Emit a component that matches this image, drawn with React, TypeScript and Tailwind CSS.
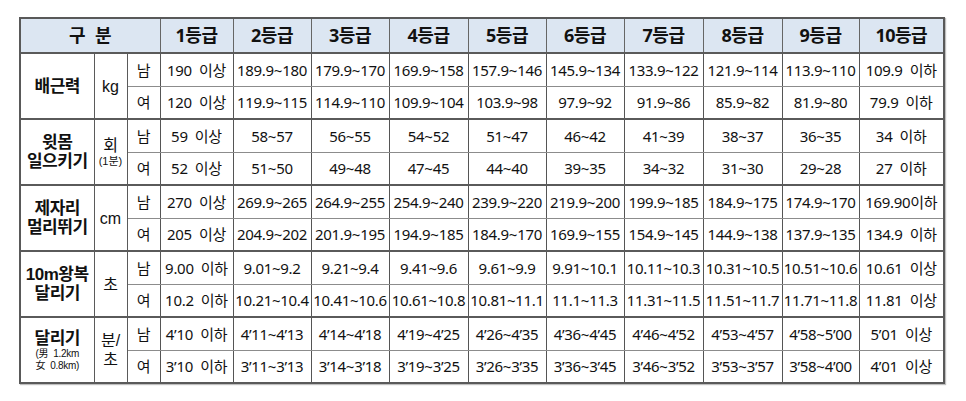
const grades = ["1등급", "2등급", "3등급", "4등급", "5등급", "6등급", "7등급", "8등급", "9등급", "10등급"];

type Group = {
  title: string[];
  small?: string[];
  unit: string;
  unitSmall?: string;
  male: string[];
  female: string[];
};

const groups: Group[] = [
  {
    title: ["배근력"],
    unit: "kg",
    male: ["190  이상", "189.9~180", "179.9~170", "169.9~158", "157.9~146", "145.9~134", "133.9~122", "121.9~114", "113.9~110", "109.9  이하"],
    female: ["120  이상", "119.9~115", "114.9~110", "109.9~104", "103.9~98", "97.9~92", "91.9~86", "85.9~82", "81.9~80", "79.9  이하"],
  },
  {
    title: ["윗몸", "일으키기"],
    unit: "회",
    unitSmall: "(1분)",
    male: ["59  이상", "58~57", "56~55", "54~52", "51~47", "46~42", "41~39", "38~37", "36~35", "34  이하"],
    female: ["52  이상", "51~50", "49~48", "47~45", "44~40", "39~35", "34~32", "31~30", "29~28", "27  이하"],
  },
  {
    title: ["제자리", "멀리뛰기"],
    unit: "cm",
    male: ["270  이상", "269.9~265", "264.9~255", "254.9~240", "239.9~220", "219.9~200", "199.9~185", "184.9~175", "174.9~170", "169.90이하"],
    female: ["205  이상", "204.9~202", "201.9~195", "194.9~185", "184.9~170", "169.9~155", "154.9~145", "144.9~138", "137.9~135", "134.9  이하"],
  },
  {
    title: ["10m왕복", "달리기"],
    unit: "초",
    male: ["9.00  이하", "9.01~9.2", "9.21~9.4", "9.41~9.6", "9.61~9.9", "9.91~10.1", "10.11~10.3", "10.31~10.5", "10.51~10.6", "10.61  이상"],
    female: ["10.2  이하", "10.21~10.4", "10.41~10.6", "10.61~10.8", "10.81~11.1", "11.1~11.3", "11.31~11.5", "11.51~11.7", "11.71~11.8", "11.81  이상"],
  },
  {
    title: ["달리기"],
    small: ["(男  1.2km", "女  0.8km)"],
    unit: "분/",
    unitSmall: "초",
    male: ["4’10  이하", "4’11~4’13", "4’14~4’18", "4’19~4’25", "4’26~4’35", "4’36~4’45", "4’46~4’52", "4’53~4’57", "4’58~5’00", "5’01  이상"],
    female: ["3’10  이하", "3’11~3’13", "3’14~3’18", "3’19~3’25", "3’26~3’35", "3’36~3’45", "3’46~3’52", "3’53~3’57", "3’58~4’00", "4’01  이상"],
  },
];

const colWidths = [74, 33, 33, 73, 78, 78, 79, 78, 78, 79, 79, 77, 85];

const font = { fontFamily: '"Noto Sans", "Noto Sans CJK KR", sans-serif' };
// tighter line boxes for the stacked labels
const labelFont = { fontFamily: '"Liberation Sans", "Noto Sans CJK KR", sans-serif' };

export default function App() {
  return (
    <div className="min-h-[401px] w-[966px] bg-white pl-[19px] pt-[17px] text-[#111]" style={font}>
      <table className="table-fixed border-collapse border-2 border-[#595959] shadow-[1px_1px_1px_rgba(0,0,0,0.25)]">
        <colgroup>
          {colWidths.map((w, i) => (
            <col key={i} style={{ width: w }} />
          ))}
        </colgroup>
        <thead>
          <tr className="h-[35px] bg-[#dce6f2]">
            <th colSpan={3} className="border border-[#666] p-0 text-[18px] font-bold whitespace-pre">
              구  분
            </th>
            {grades.map((g) => (
              <th key={g} className="border border-[#666] p-0 text-[18px] font-bold tracking-[-0.5px]">
                {g}
              </th>
            ))}
          </tr>
        </thead>
        <tbody>
          {groups.map((g, gi) => (
            <GroupRows key={gi} g={g} />
          ))}
        </tbody>
      </table>
    </div>
  );
}

function GroupRows({ g }: { g: Group }) {
  const cell = "border-x border-[#555] text-center text-[15px] leading-[20px] whitespace-pre p-0 tracking-[-0.3px]";
  return (
    <>
      <tr className="h-[33px]">
        <td
          rowSpan={2}
          className="border-x border-t-2 border-b-2 border-[#5a5a5a] p-0 text-center align-middle"
          style={labelFont}
        >
          {g.title.map((t) => (
            <div key={t} className="text-[17px] font-bold leading-[19px] tracking-[-0.5px]">
              {t}
            </div>
          ))}
          {g.small &&
            g.small.map((t) => (
              <div key={t} className="text-[10px] leading-[12px] whitespace-pre tracking-[-0.3px]">
                {t}
              </div>
            ))}
        </td>
        <td
          rowSpan={2}
          className="border-x border-t-2 border-b-2 border-[#5a5a5a] p-0 text-center align-middle"
          style={labelFont}
        >
          <div className="text-[16px] leading-[19px]">{g.unit}</div>
          {g.unitSmall && (
            <div className={g.unit === "회" ? "text-[11px] leading-[13px]" : "text-[16px] leading-[19px]"}>
              {g.unitSmall}
            </div>
          )}
        </td>
        <td className={`${cell} border-t-2 border-t-[#5a5a5a] border-b border-b-[#8c8c8c]`}>남</td>
        {g.male.map((v, i) => (
          <td key={i} className={`${cell} border-t-2 border-t-[#5a5a5a] border-b border-b-[#8c8c8c]`}>
            {v}
          </td>
        ))}
      </tr>
      <tr className="h-[33px]">
        <td className={`${cell} border-b-2 border-b-[#5a5a5a]`}>여</td>
        {g.female.map((v, i) => (
          <td key={i} className={`${cell} border-b-2 border-b-[#5a5a5a]`}>
            {v}
          </td>
        ))}
      </tr>
    </>
  );
}
